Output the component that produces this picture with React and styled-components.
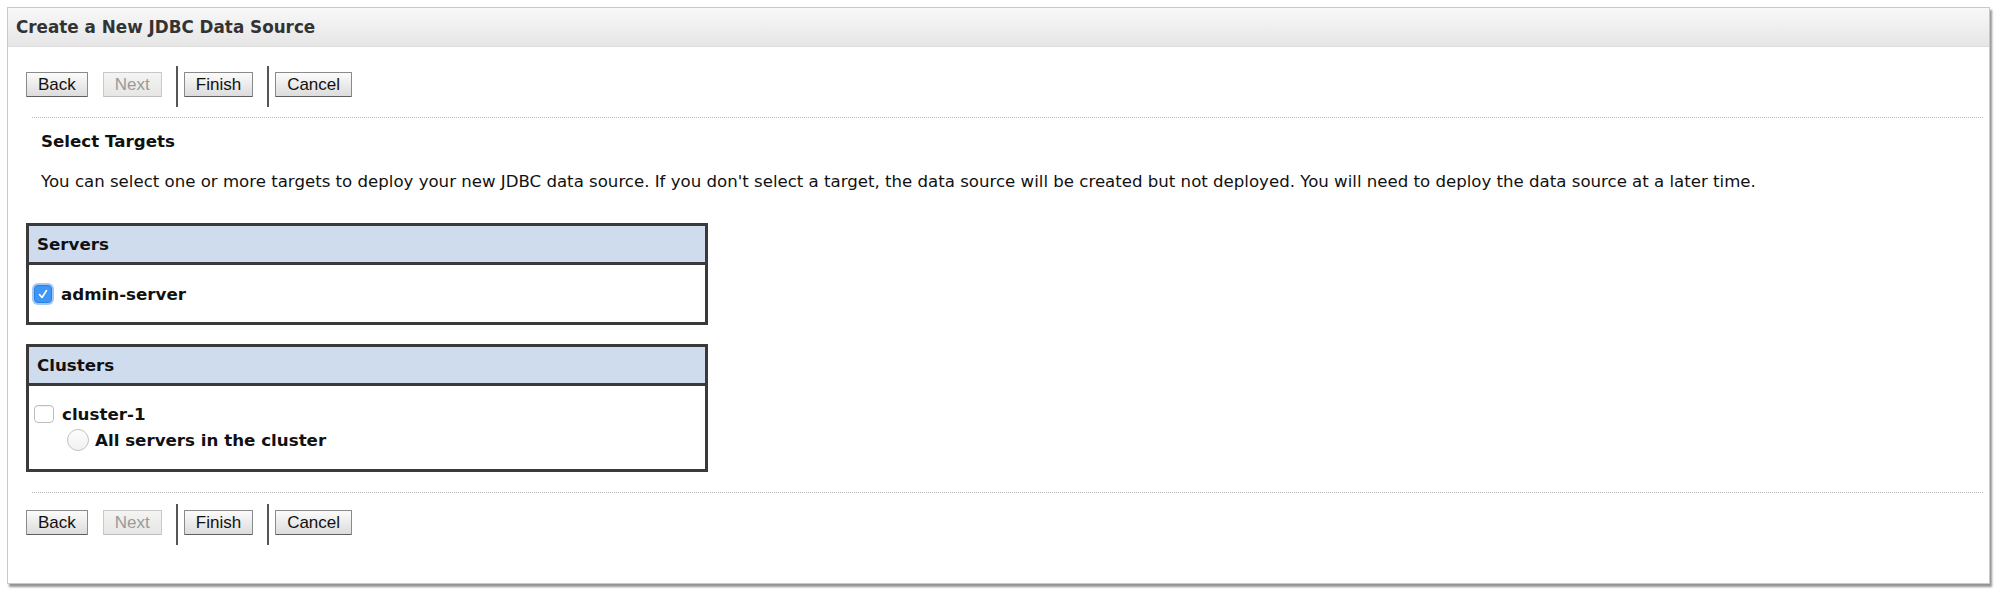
import React from "react";
import styled, { createGlobalStyle } from "styled-components";

const Global = createGlobalStyle`
  html, body { margin: 0; padding: 0; background: #ffffff; }
  body { width: 1999px; height: 593px; overflow: hidden; }
`;

const Page = styled.div`
  padding: 7px 0 0 7px;
`;

const Panel = styled.div`
  width: 1981px;
  height: 575px;
  border: 1px solid #c4cacd;
  background: #fff;
  box-shadow: 2px 3px 2px rgba(60, 60, 60, 0.55);
  display: flex;
  flex-direction: column;
`;

const Header = styled.div`
  height: 38px;
  display: flex;
  align-items: center;
  padding-left: 8px;
  background: linear-gradient(#f8f8f8, #e6e6e6);
  border-bottom: 1px solid #dcdcdc;
  font-family: "DejaVu Sans", sans-serif;
  font-weight: bold;
  font-size: 16.8px;
  color: #333;
`;

const Body = styled.div`
  padding: 19px 16px 0 18px;
  display: flex;
  flex-direction: column;
`;

const Toolbar = styled.div`
  display: flex;
  align-items: flex-start;
  height: 41px;
  margin-top: ${(p) => p.$top || 0}px;
`;

const Button = styled.button`
  margin-top: 6px;
  margin-right: ${(p) => p.$gap}px;
  height: 25px;
  padding: 0 11px;
  font-family: "Liberation Sans", Arial, sans-serif;
  font-size: 17px;
  line-height: 23px;
  color: ${(p) => (p.disabled ? "#9a9a9a" : "#111")};
  background: ${(p) =>
    p.disabled ? "linear-gradient(#f4f4f2, #e6e6e4)" : "linear-gradient(#fbfbfb, #dcdcdc)"};
  border: 1px solid ${(p) => (p.disabled ? "#c8c8c8" : "#8a8a8a")};
  border-bottom-color: ${(p) => (p.disabled ? "#bdbdbd" : "#5e5e5e")};
  border-radius: 1px;
  cursor: default;
`;

const Separator = styled.div`
  width: 2px;
  height: 41px;
  background: #555;
  margin-right: 6px;
`;

const Dotted = styled.div`
  margin: ${(p) => p.$top}px 0 0 6px;
  width: 1951px;
  border-top: 1px dotted #b8b8b8;
`;

const Section = styled.div`
  padding-left: 15px;
  font-family: "DejaVu Sans", sans-serif;
  color: #111;
`;

const Title = styled.div`
  margin-top: 13px;
  font-weight: bold;
  font-size: 16.7px;
  line-height: 20px;
`;

const Text = styled.div`
  margin-top: 21px;
  font-size: 16.6px;
  line-height: 20px;
  white-space: nowrap;
`;

const Box = styled.div`
  margin-top: ${(p) => p.$top}px;
  width: 676px;
  border: 3px solid #3a3a3a;
  font-family: "DejaVu Sans", sans-serif;
  font-weight: bold;
  font-size: 16.7px;
  color: #111;
`;

const BoxHead = styled.div`
  height: 36px;
  display: flex;
  align-items: center;
  padding-left: 8px;
  background: #cfdcee;
  border-bottom: 3px solid #3a3a3a;
`;

const BoxBody = styled.div`
  box-sizing: border-box;
  height: ${(p) => p.$h}px;
  padding: ${(p) => p.$pt}px 0 0 5px;
  display: flex;
  flex-direction: column;
`;

const Row = styled.label`
  display: flex;
  align-items: center;
  height: 26px;
  padding-left: ${(p) => p.$indent || 0}px;
  gap: ${(p) => p.$gap}px;
`;

const Check = styled.span`
  width: ${(p) => p.$w || 18}px;
  height: 18px;
  box-sizing: border-box;
  border-radius: 4px;
  display: flex;
  align-items: center;
  justify-content: center;
  background: ${(p) => (p.$on ? "#3e96f6" : "#fff")};
  border: 1px solid ${(p) => (p.$on ? "#2a7fe0" : "#bdbdbd")};
  box-shadow: ${(p) => (p.$on ? "0 0 0 2px rgba(90,155,235,0.55)" : "inset 0 1px 1px rgba(0,0,0,0.05)")};
`;

const Radio = styled.span`
  width: 22px;
  height: 22px;
  box-sizing: border-box;
  border-radius: 50%;
  border: 1px solid #c2c2c2;
  background: linear-gradient(#fdfdfd, #f1f1f1);
`;

function Bar({ top }) {
  return (
    <Toolbar $top={top}>
      <Button $gap={15}>Back</Button>
      <Button $gap={14} disabled>Next</Button>
      <Separator />
      <Button $gap={14}>Finish</Button>
      <Separator />
      <Button $gap={0}>Cancel</Button>
    </Toolbar>
  );
}

export default function App() {
  return (
    <Page>
      <Global />
      <Panel>
        <Header>Create a New JDBC Data Source</Header>
        <Body>
          <Bar />
          <Dotted $top={10} />
          <Section>
            <Title>Select Targets</Title>
            <Text>
              You can select one or more targets to deploy your new JDBC data source. If you don't select a target, the data source will be created but not deployed. You will need to deploy the data source at a later time.
            </Text>
          </Section>
          <Box $top={31}>
            <BoxHead>Servers</BoxHead>
            <BoxBody $h={57} $pt={16}>
              <Row $gap={9}>
                <Check $on>
                  <svg width="12" height="12" viewBox="0 0 12 12">
                    <path d="M2.5 6.5 L5 9.5 L9.5 2.5" fill="none" stroke="#fff" strokeWidth="1.6" strokeLinecap="round" strokeLinejoin="round" />
                  </svg>
                </Check>
                admin-server
              </Row>
            </BoxBody>
          </Box>
          <Box $top={19}>
            <BoxHead>Clusters</BoxHead>
            <BoxBody $h={83} $pt={15}>
              <Row $gap={8}>
                <Check $w={20} />
                cluster-1
              </Row>
              <Row $indent={33} $gap={6}>
                <Radio />
                All servers in the cluster
              </Row>
            </BoxBody>
          </Box>
          <Dotted $top={20} />
          <Bar top={11} />
        </Body>
      </Panel>
    </Page>
  );
}
